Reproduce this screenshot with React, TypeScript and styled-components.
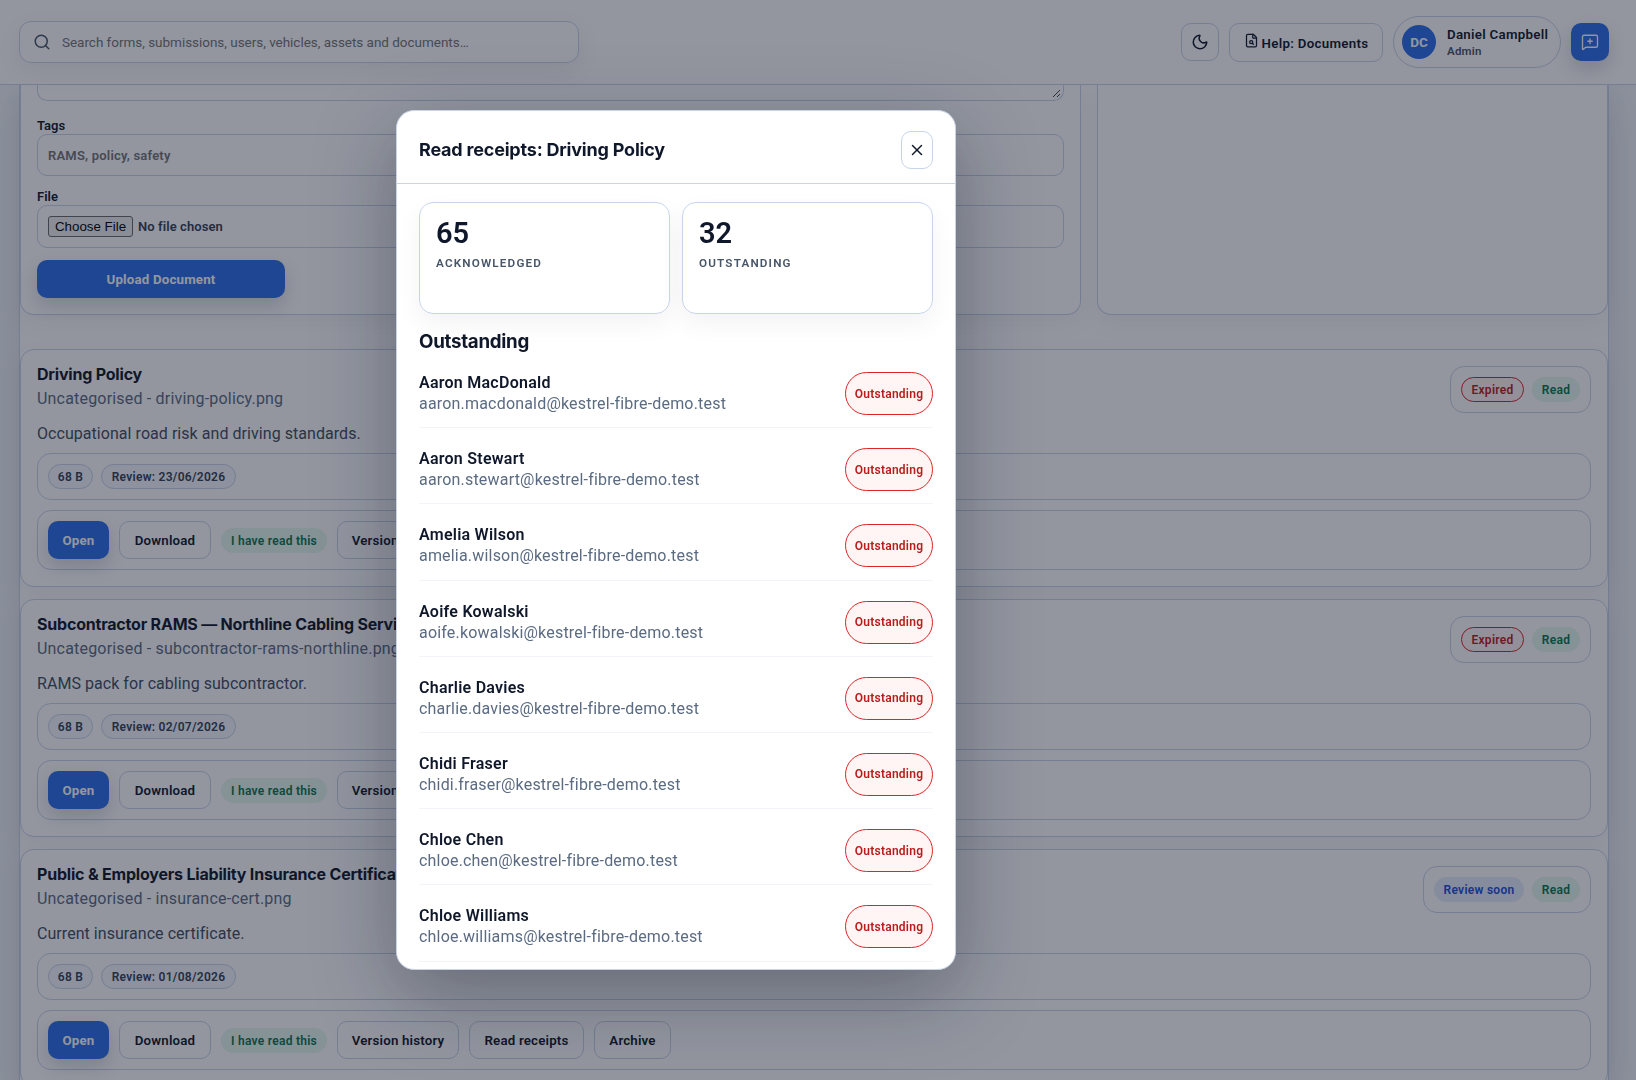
import { FileSearch, MessageSquarePlus, Moon, Search, X } from "lucide-react";
import styled, { createGlobalStyle, css } from "styled-components";

const line = "#c8d4e9";
const ink = "#0f172a";
const body = `Roboto, "Noto Sans", sans-serif`;
const display = `Inter, "Liberation Sans", sans-serif`;

type Status = { label: string; tone: "danger" | "success" | "info" };

const documents: { title: string; file: string; text: string; review: string; status: Status }[] = [
	{
		title: "Driving Policy",
		file: "driving-policy.png",
		text: "Occupational road risk and driving standards.",
		review: "23/06/2026",
		status: { label: "Expired", tone: "danger" },
	},
	{
		title: "Subcontractor RAMS — Northline Cabling Services",
		file: "subcontractor-rams-northline.png",
		text: "RAMS pack for cabling subcontractor.",
		review: "02/07/2026",
		status: { label: "Expired", tone: "danger" },
	},
	{
		title: "Public & Employers Liability Insurance Certificate",
		file: "insurance-cert.png",
		text: "Current insurance certificate.",
		review: "01/08/2026",
		status: { label: "Review soon", tone: "info" },
	},
];

const people = [
	"Aaron MacDonald",
	"Aaron Stewart",
	"Amelia Wilson",
	"Aoife Kowalski",
	"Charlie Davies",
	"Chidi Fraser",
	"Chloe Chen",
	"Chloe Williams",
];

const toEmail = (name: string) =>
	`${name.toLowerCase().replace(" ", ".")}@kestrel-fibre-demo.test`;

const DocumentItem = ({ doc }: { doc: (typeof documents)[number] }) => (
	<DocCard>
		<DocHead>
			<div>
				<DocTitle>{doc.title}</DocTitle>
				<DocFile>Uncategorised - {doc.file}</DocFile>
			</div>
			<StatusBox>
				<Pill $tone={doc.status.tone} $width={doc.status.tone === "info" ? 90 : 63}>
					{doc.status.label}
				</Pill>
				<Pill $tone="success" $width={48}>Read</Pill>
			</StatusBox>
		</DocHead>
		<DocText>{doc.text}</DocText>
		<MetaBox>
			<Pill $tone="neutral" $width={45}>68 B</Pill>
			<Pill $tone="neutral" $width={135}>Review: {doc.review}</Pill>
		</MetaBox>
		<ActionBox>
			<Button $primary $width={61}>Open</Button>
			<Button $width={92}>Download</Button>
			<Pill $tone="success" $width={106}>I have read this</Pill>
			<Button $width={122}>Version history</Button>
			<Button $width={115}>Read receipts</Button>
			<Button $width={77}>Archive</Button>
		</ActionBox>
	</DocCard>
);

const App = () => {
	return (
		<>
			<GlobalStyle />
			<Page>
				<Topbar>
					<SearchBox>
						<Search size={18} strokeWidth={2} />
						<span>Search forms, submissions, users, vehicles, assets and documents…</span>
					</SearchBox>
					<TopActions>
						<IconButton aria-label="Theme">
							<Moon size={18} />
						</IconButton>
						<HelpButton>
							<FileSearch size={15} />
							<span>Help: Documents</span>
						</HelpButton>
						<Profile>
							<Avatar>DC</Avatar>
							<div>
								<ProfileName>Daniel Campbell</ProfileName>
								<ProfileRole>Admin</ProfileRole>
							</div>
						</Profile>
						<IconButton $primary aria-label="Feedback">
							<MessageSquarePlus size={18} strokeWidth={1.8} />
						</IconButton>
					</TopActions>
				</Topbar>

				<Shell>
					<UploadGrid>
						<Panel>
							<TextArea>
								<svg width="10" height="10" viewBox="0 0 10 10" stroke="#444" strokeWidth="1">
									<path d="M1 8L8 1M5 8L8 5" />
								</svg>
							</TextArea>
							<Label>Tags</Label>
							<Field $height={42} $muted>RAMS, policy, safety</Field>
							<Label>File</Label>
							<Field $height={43}>
								<FileButton>Choose File</FileButton>
								<span>No file chosen</span>
							</Field>
							<UploadButton $primary $width={248}>Upload Document</UploadButton>
						</Panel>
						<Panel />
					</UploadGrid>
					<DocList>
						{documents.map((doc) => (
							<DocumentItem key={doc.title} doc={doc} />
						))}
					</DocList>
				</Shell>
			</Page>

			<Backdrop>
				<Modal role="dialog">
					<ModalHeader>
						<ModalTitle>Read receipts: Driving Policy</ModalTitle>
						<CloseButton aria-label="Close">
							<X size={18} />
						</CloseButton>
					</ModalHeader>
					<ModalBody>
						<Stats>
							<StatCard>
								<StatValue>65</StatValue>
								<StatLabel>Acknowledged</StatLabel>
							</StatCard>
							<StatCard>
								<StatValue>32</StatValue>
								<StatLabel>Outstanding</StatLabel>
							</StatCard>
						</Stats>
						<SectionTitle>Outstanding</SectionTitle>
						{people.map((name) => (
							<PersonRow key={name}>
								<div>
									<PersonName>{name}</PersonName>
									<PersonEmail>{toEmail(name)}</PersonEmail>
								</div>
								<OutstandingPill>Outstanding</OutstandingPill>
							</PersonRow>
						))}
					</ModalBody>
				</Modal>
			</Backdrop>
		</>
	);
};

const GlobalStyle = createGlobalStyle`
    * {
        box-sizing: border-box;
    }

    body {
        margin: 0;
        overflow: hidden;
        background: #f1f5f9;
        color: ${ink};
        font-family: ${body};
    }

    button {
        font-family: inherit;
    }
`

const Page = styled.div`
    display: flex;
    flex-direction: column;
    height: 1080px;
    overflow: hidden;
`

const Topbar = styled.header`
    position: relative;
    z-index: 1;
    display: flex;
    align-items: center;
    justify-content: space-between;
    flex: none;
    height: 85px;
    padding: 0 27px 0 19px;
    border-bottom: 1px solid ${line};
    background: #fff;
`

const SearchBox = styled.div`
    display: flex;
    align-items: center;
    gap: 11px;
    width: 560px;
    height: 42px;
    padding: 0 13px;
    border: 1px solid ${line};
    border-radius: 12px;
    box-shadow: 0 8px 24px rgba(15, 23, 42, 0.07);
    color: #757575;
    font-size: 13.5px;
    letter-spacing: -0.03px;

    svg {
        color: #475569;
    }
`

const TopActions = styled.div`
    display: flex;
    align-items: center;
    gap: 10px;
`

const primary = css`
    border-color: transparent;
    background: #2c6ee9;
    background-clip: border-box;
    color: #fff;
    font-weight: 700;
    box-shadow: 0 8px 18px rgba(15, 23, 42, 0.16);
`

const IconButton = styled.button<{ $primary?: boolean }>`
    display: flex;
    align-items: center;
    justify-content: center;
    width: 38px;
    height: 38px;
    padding: 0;
    border: 1px solid ${line};
    border-radius: 10px;
    background: #fff;
    color: ${ink};

    ${({ $primary }) => $primary && primary}
`

const HelpButton = styled.button`
    display: flex;
    align-items: center;
    justify-content: center;
    gap: 3px;
    width: 154px;
    height: 39px;
    padding: 0;
    border: 1px solid ${line};
    border-radius: 10px;
    background: #fff;
    color: ${ink};
    font-size: 13.3px;
    font-weight: 600;
    letter-spacing: 0.3px;

    svg {
        margin-top: -4px;
    }

    span {
        margin-top: 2px;
    }
`

const Profile = styled.div`
    display: flex;
    align-items: center;
    gap: 11px;
    width: 168px;
    height: 52px;
    padding-left: 8px;
    border: 1px solid ${line};
    border-radius: 26px;
    background: #fff;
`

const Avatar = styled.div`
    display: flex;
    align-items: center;
    justify-content: center;
    width: 34px;
    height: 34px;
    border-radius: 50%;
    background: #2c6ee9;
    color: #fff;
    font-size: 13.5px;
    font-weight: 700;
`

const ProfileName = styled.div`
    font-size: 13.3px;
    font-weight: 600;
    line-height: 17px;
    letter-spacing: 0.28px;
`

const ProfileRole = styled.div`
    color: #475569;
    font-size: 11.5px;
    font-weight: 600;
    line-height: 16px;
    letter-spacing: 0.2px;
`

const Shell = styled.main`
    display: flex;
    flex-direction: column;
    flex: 1;
    gap: 34px;
    margin: 0 27px 0 19px;
    border: solid ${line};
    border-width: 0 1px;
    background: #fff;
    box-shadow: 0 12px 40px rgba(15, 23, 42, 0.1);
`

const UploadGrid = styled.section`
    display: grid;
    grid-template-columns: 1061px 1fr;
    gap: 16px;
    height: 230px;
`

const Panel = styled.div`
    padding: 0 16px;
    border: 1px solid ${line};
    border-top: 0;
    border-radius: 0 0 14px 14px;
    background: #fff;
    box-shadow: 0 8px 24px rgba(15, 23, 42, 0.05);
`

const TextArea = styled.div`
    display: flex;
    align-items: flex-end;
    justify-content: flex-end;
    height: 16px;
    margin-bottom: 16px;
    padding: 1px;
    border: 1px solid ${line};
    border-top: 0;
    border-radius: 0 0 10px 10px;
`

const Label = styled.div`
    height: 17px;
    font-size: 13px;
    font-weight: 600;
    line-height: 17px;
`

const Field = styled.div<{ $height: number; $muted?: boolean }>`
    display: flex;
    align-items: center;
    gap: 5px;
    height: ${({ $height }) => $height}px;
    margin-bottom: 12px;
    padding: 0 10px;
    border: 1px solid ${line};
    border-radius: 10px;
    color: ${({ $muted }) => ($muted ? "#757575" : "#334155")};
    font-size: 13px;
    font-weight: 600;
    letter-spacing: ${({ $muted }) => ($muted ? 0.2 : 0.08)}px;
`

const FileButton = styled.button`
    width: 85px;
    height: 21px;
    padding: 0;
    border: 1px solid #6b6b6b;
    border-radius: 3px;
    background: #efefef;
    color: #000;
    font: 13.333px "Liberation Sans", Arial, sans-serif;
`

const Button = styled.button<{ $primary?: boolean; $width: number }>`
    flex: none;
    width: ${({ $width }) => $width}px;
    height: 38px;
    padding: 0;
    border: 1px solid ${line};
    border-radius: 10px;
    background: #fff;
    color: ${ink};
    font-size: 13.3px;
    font-weight: 600;
    letter-spacing: 0.18px;

    ${({ $primary }) => $primary && primary}
`

const UploadButton = styled(Button)`
    display: block;
`

const DocList = styled.section`
    display: flex;
    flex-direction: column;
    gap: 12px;
`

const DocCard = styled.article`
    height: 238px;
    padding: 16px;
    border: 1px solid ${line};
    border-radius: 14px;
    background: #fff;
    box-shadow: 0 8px 24px rgba(15, 23, 42, 0.05);
`

const DocHead = styled.div`
    display: flex;
    justify-content: space-between;
    height: 56px;
`

const DocTitle = styled.h3`
    margin: -1px 0 0;
    font-family: ${display};
    font-size: 16px;
    font-weight: 700;
    line-height: 18px;
    letter-spacing: -0.2px;
`

const DocFile = styled.div`
    margin-top: 3px;
    color: #5b6b82;
    font-size: 16px;
    line-height: 25px;
    letter-spacing: 0.19px;
`

const DocText = styled.p`
    height: 31px;
    margin: 0;
    color: #3f4d63;
    font-size: 16px;
    line-height: 24px;
    letter-spacing: 0.05px;
`

const boxed = css`
    display: flex;
    align-items: center;
    border: 1px solid ${line};
    border-radius: 14px;
    padding: 0 10px;
`

const StatusBox = styled.div`
    ${boxed}
    gap: 8px;
    height: 47px;
`

const MetaBox = styled.div`
    ${boxed}
    gap: 8px;
    height: 47px;
`

const ActionBox = styled.div`
    ${boxed}
    gap: 10px;
    height: 60px;
    margin-top: 10px;

    > span {
        margin-top: 1px;
    }
`

const tones = {
	neutral: css`
        border-color: ${line};
        background: #f5f8fd;
        color: #334155;
    `,
	danger: css`
        border-color: #dc2626;
        background: #fff5f5;
        color: #b91c1c;
    `,
	success: css`
        background: #e6f7ef;
        color: #08754c;
    `,
	info: css`
        background: #e4edfb;
        color: #1d4ed8;
    `,
};

const Pill = styled.span<{ $tone: keyof typeof tones; $width: number }>`
    display: flex;
    align-items: center;
    justify-content: center;
    flex: none;
    width: ${({ $width }) => $width}px;
    height: 25px;
    border: 1px solid transparent;
    border-radius: 13px;
    font-size: 12px;
    font-weight: 600;
    letter-spacing: 0.27px;
    white-space: nowrap;

    ${({ $tone }) => tones[$tone]}
`

const Backdrop = styled.div`
    position: fixed;
    inset: 0;
    z-index: 10;
    padding: 110px 0 0 396px;
    background: rgba(15, 23, 42, 0.45);
`

const Modal = styled.div`
    display: flex;
    flex-direction: column;
    width: 560px;
    height: 860px;
    border: 1px solid ${line};
    border-radius: 18px;
    background: #fff;
    box-shadow: 0 24px 80px rgba(15, 23, 42, 0.35);
    overflow: hidden;
`

const ModalHeader = styled.header`
    display: flex;
    align-items: center;
    justify-content: space-between;
    flex: none;
    height: 73px;
    padding: 5px 22px 0;
    border-bottom: 1px solid ${line};
`

const ModalTitle = styled.h2`
    margin: 0;
    font-family: ${display};
    font-size: 18px;
    font-weight: 650;
    letter-spacing: -0.2px;
`

const CloseButton = styled.button`
    display: flex;
    align-items: center;
    justify-content: center;
    width: 32px;
    height: 38px;
    padding: 0;
    border: 1px solid ${line};
    border-radius: 10px;
    background: #fff;
    color: ${ink};
`

const ModalBody = styled.div`
    padding: 18px 22px 0;
`

const Stats = styled.div`
    display: grid;
    grid-template-columns: 1fr 1fr;
    gap: 12px;
`

const StatCard = styled.div`
    height: 112px;
    padding: 14px 16px;
    border: 1px solid ${line};
    border-radius: 14px;
    box-shadow: 0 10px 26px rgba(15, 23, 42, 0.05);
`

const StatValue = styled.div`
    font-size: 29px;
    font-weight: 600;
    line-height: 32px;
`

const StatLabel = styled.div`
    margin-top: 6px;
    color: #475569;
    font-size: 11.7px;
    font-weight: 600;
    line-height: 16px;
    letter-spacing: 1.17px;
    text-transform: uppercase;
`

const SectionTitle = styled.h3`
    margin: 16px 0 5px;
    font-family: ${display};
    font-size: 18.72px;
    font-weight: 650;
    line-height: 24px;
    letter-spacing: -0.27px;
`

const PersonRow = styled.div`
    display: flex;
    justify-content: space-between;
    height: 69.2px;
    margin-bottom: 7px;
    padding-top: 13px;
    border-bottom: 1px solid #f1f4f9;
`

const PersonName = styled.div`
    margin: 1px 0;
    font-size: 16px;
    font-weight: 600;
    line-height: 20px;
    letter-spacing: 0.25px;
`

const PersonEmail = styled.div`
    color: #5b6b82;
    font-size: 16px;
    line-height: 20px;
    letter-spacing: 0.19px;
`

const OutstandingPill = styled.span`
    display: flex;
    align-items: center;
    justify-content: center;
    width: 88px;
    height: 43px;
    border: 1px solid #dc2626;
    border-radius: 22px;
    background: #fff5f5;
    color: #b91c1c;
    font-size: 12px;
    font-weight: 600;
    letter-spacing: 0.25px;
`

export default App;
